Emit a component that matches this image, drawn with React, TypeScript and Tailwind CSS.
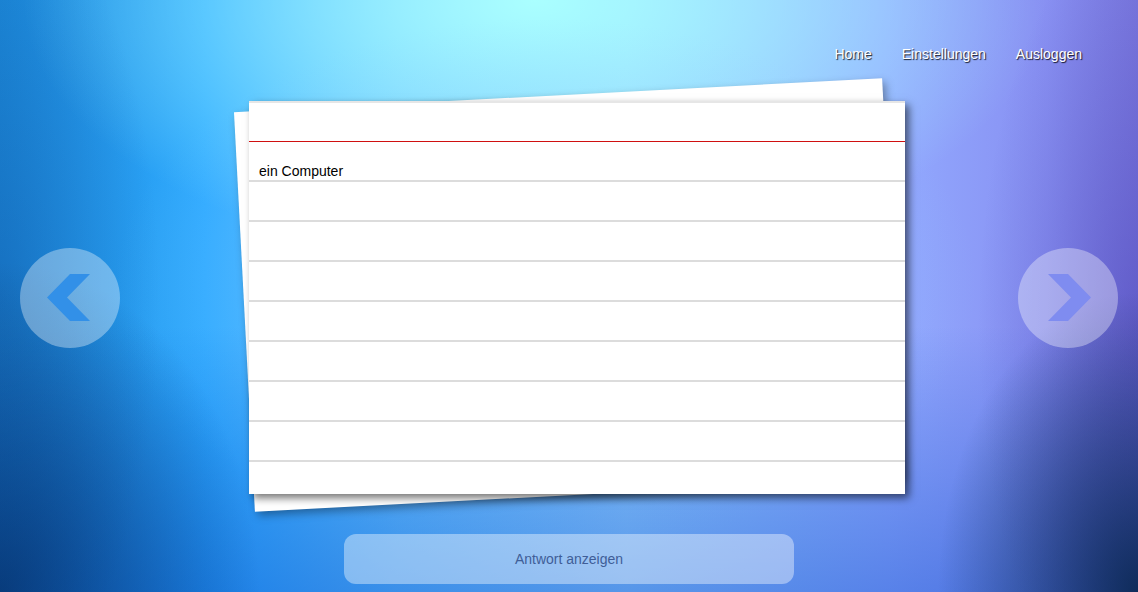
import React from 'react'

const rows = ['ein Computer', '', '', '', '', '', '', '']

const ArrowButton = ({ dir }: { dir: 'left' | 'right' }) => (
  <button className="flex h-[100px] w-[100px] items-center justify-center rounded-full bg-white/35">
    <svg width="46" height="48" viewBox="0 0 46 48">
      {dir === 'left' ? (
        <polygon points="23,0 43,0 20,23.5 43,47 23,47 0,23.5" fill="#3290e8" />
      ) : (
        <polygon points="3,0 23,0 46,23.5 23,47 3,47 26,23.5" fill="#7f8cf0" />
      )}
    </svg>
  </button>
)

export default function App() {
  return (
    <div className="relative h-[592px] w-full overflow-hidden font-['Liberation_Sans',Arial,sans-serif] bg-[radial-gradient(ellipse_260px_330px_at_0%_100%,rgba(5,40,90,0.7)_0%,rgba(5,40,90,0)_100%),radial-gradient(ellipse_200px_300px_at_100%_100%,rgba(5,35,70,0.85)_0%,rgba(5,35,70,0)_100%),radial-gradient(ellipse_160px_400px_at_0%_50%,rgba(10,60,140,0.3)_0%,rgba(10,60,140,0)_100%),radial-gradient(ellipse_160px_400px_at_100%_55%,rgba(60,50,170,0.4)_0%,rgba(60,50,170,0)_100%),linear-gradient(to_bottom,rgba(0,70,200,0)_55%,rgba(0,70,200,0.4)_100%),radial-gradient(ellipse_38%_45%_at_48%_48%,rgba(150,205,255,0.55)_0%,rgba(150,205,255,0)_100%),radial-gradient(ellipse_45%_45%_at_47%_0%,rgba(170,255,255,1)_0%,rgba(170,255,255,0)_100%),linear-gradient(to_right,#1c88d8_0%,#2eaaff_18%,#62c0ff_35%,#90ccff_55%,#92aaff_78%,#8890f2_92%,#7a78de_100%)]">
      {/* Nav */}
      <nav className="flex justify-end gap-[30px] pr-[56px] pt-[46px] text-[14px] leading-4 text-white [text-shadow:1px_1px_1px_rgba(0,0,0,0.85)]">
        <a>Home</a>
        <a>Einstellungen</a>
        <a>Ausloggen</a>
      </nav>

      {/* Card area */}
      <div className="mt-[39px] flex items-center px-[20px]">
        <ArrowButton dir="left" />

        <div className="relative ml-[129px] h-[393px] w-[656px]">
          {/* back card */}
          <div className="absolute left-[-5px] top-[-6px] h-[400px] w-[649px] rotate-[-3deg] bg-white shadow-[3px_4px_8px_rgba(0,0,0,0.35)]" />

          {/* front card */}
          <div className="relative h-[393px] w-[656px] bg-white shadow-[4px_4px_8px_rgba(0,0,0,0.55)]">
            <div className="h-[41px] border-t-2 border-b border-t-[#e6e6e6] border-b-[#d01010]" />
            {rows.map((text, i) => (
              <div
                key={i}
                className="flex h-[40px] items-end border-b-2 border-[#dcdcdc] pl-[10px] text-[14px] leading-[18px] text-black"
              >
                {text}
              </div>
            ))}
          </div>
        </div>

        <div className="ml-auto">
          <ArrowButton dir="right" />
        </div>
      </div>

      {/* Answer button */}
      <div className="mt-[40px] flex justify-center">
        <button className="h-[50px] w-[450px] rounded-[12px] bg-white/40 text-[14px] text-[#3f5e98]">
          Antwort anzeigen
        </button>
      </div>
    </div>
  )
}
